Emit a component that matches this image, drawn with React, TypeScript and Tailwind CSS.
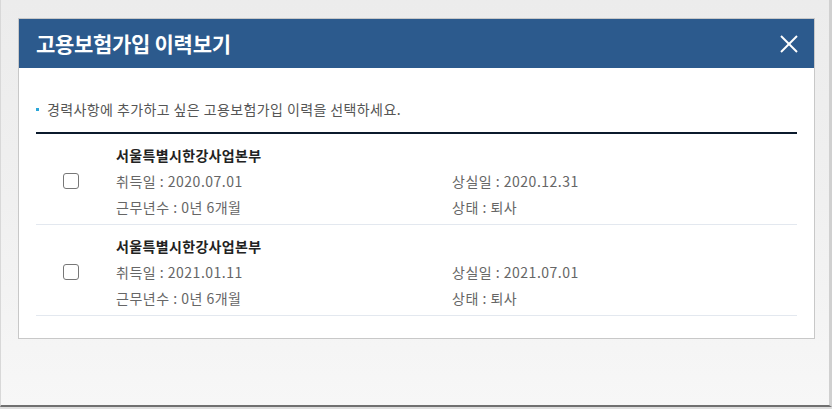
const rows = [
  { org: '서울특별시한강사업본부', start: '2020.07.01', end: '2020.12.31', years: '0년 6개월', status: '퇴사' },
  { org: '서울특별시한강사업본부', start: '2021.01.11', end: '2021.07.01', years: '0년 6개월', status: '퇴사' },
]

function CloseIcon() {
  return (
    <svg width="18" height="18" viewBox="0 0 18 18" className="block">
      <line x1="1" y1="1" x2="17" y2="17" stroke="#fff" strokeWidth="2" />
      <line x1="17" y1="1" x2="1" y2="17" stroke="#fff" strokeWidth="2" />
    </svg>
  )
}

export default function App() {
  return (
    <div className="w-[832px] h-[409px] bg-[#dedede] overflow-hidden font-['Noto_Sans_CJK_KR','Noto_Sans',sans-serif]">
      <div className="h-[407px] bg-gradient-to-b from-[#ececec] via-[#f0f0f0] to-[#f7f7f7] border-l border-l-[#d8d8d8] border-r-[3px] border-r-[#d0d0d0] border-b-2 border-b-[#707070] pt-[18px] pl-[17px] pr-[14px]">
        <div className="w-[797px] bg-white border border-[#c8c8c8]">
          {/* header */}
          <div className="h-[49px] bg-[#2c5a8d] flex items-center justify-between pl-[17px] pr-[16px]">
            <h1 className="text-white text-[21px] font-bold tracking-[-0.3px]">고용보험가입 이력보기</h1>
            <button className="p-0">
              <CloseIcon />
            </button>
          </div>

          <div className="px-[17px] pt-[31px] pb-[22px]">
            <p className="flex items-center gap-[8px] text-[14px] leading-[20px] text-[#555] tracking-[0.4px] mb-[13px]">
              <span className="w-[3px] h-[3px] bg-[#2aa6d8] inline-block" />
              경력사항에 추가하고 싶은 고용보험가입 이력을 선택하세요.
            </p>

            <div className="border-t-2 border-[#0b1a2c]">
              {rows.map((r, i) => (
                <div key={i} className="flex border-b border-[#e3e8ef] pt-[8px] pb-[4px]">
                  <div className="w-[80px] flex items-center pl-[27px]">
                    <span className="w-[16px] h-[16px] border border-[#777] rounded-[3px] bg-white" />
                  </div>
                  <div className="flex-1 text-[14px] leading-[26px] text-[#666] tracking-[0.5px]">
                    <div className="font-bold text-[#222] tracking-[0.35px]">{r.org}</div>
                    <div className="flex">
                      <span className="w-[336px]">취득일 : {r.start}</span>
                      <span>상실일 : {r.end}</span>
                    </div>
                    <div className="flex">
                      <span className="w-[336px]">근무년수 : {r.years}</span>
                      <span>상태 : {r.status}</span>
                    </div>
                  </div>
                </div>
              ))}
            </div>
          </div>
        </div>
      </div>
    </div>
  )
}
